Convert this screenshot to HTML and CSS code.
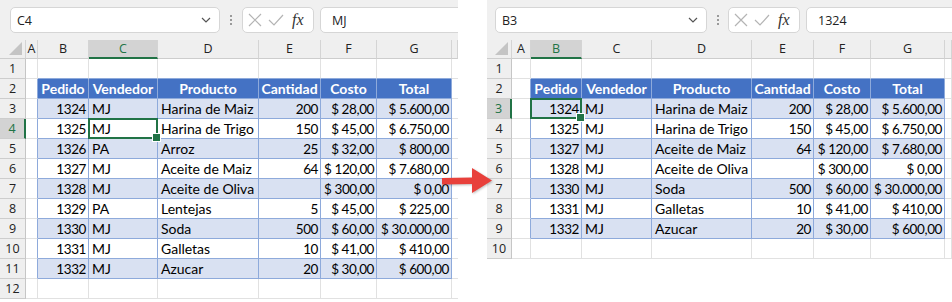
FILE: index.html
```html
<!DOCTYPE html>
<html lang="es">

<head>
  <meta charset="UTF-8">
  <title>Filtrar filas</title>
  <link rel="stylesheet" href="styles.css">
</head>

<body>
  <div class="page">
    <!-- hoja original -->
    <div class="sheet sheet-left">
      <div class="fbar">
        <div class="namebox">
          <span>C4</span>
          <svg class="chev" width="10" height="6" viewBox="0 0 10 6"><polyline points="1,1 5,5 9,1" fill="none" stroke="#555" stroke-width="1.2"/></svg>
        </div>
        <div class="grip"><i></i><i></i><i></i></div>
        <div class="fxbox">
          <svg width="14" height="14" viewBox="0 0 14 14"><path d="M1 1 L13 13 M13 1 L1 13" stroke="#b4b4b4" stroke-width="1.2"/></svg>
          <svg width="16" height="14" viewBox="0 0 16 14"><polyline points="1,7 6,12 15,2" fill="none" stroke="#b4b4b4" stroke-width="1.2"/></svg>
          <span class="fx">fx</span>
        </div>
        <div class="finput">MJ</div>
      </div>
      <div class="grid grid-left">
        <div class="h corner"></div><div class="h">A</div><div class="h">B</div><div class="h hsel">C</div><div class="h">D</div><div class="h">E</div><div class="h">F</div><div class="h">G</div><div class="h"></div>

        <div class="r">1</div><div class="c"></div><div class="c top"></div><div class="c top"></div><div class="c top"></div><div class="c top"></div><div class="c top"></div><div class="c top"></div><div class="c"></div>

        <div class="r">2</div><div class="c tl"></div><div class="c th">Pedido</div><div class="c th">Vendedor</div><div class="c th">Producto</div><div class="c th">Cantidad</div><div class="c th">Costo</div><div class="c th">Total</div><div class="c"></div>

        <div class="r">3</div><div class="c tl"></div><div class="c t b n">1324</div><div class="c t b">MJ</div><div class="c t b">Harina de Maiz</div><div class="c t b n">200</div><div class="c t b n">$ 28,00</div><div class="c t b n">$ 5.600,00</div><div class="c"></div>

        <div class="r rsel">4</div><div class="c tl"></div><div class="c t n">1325</div><div class="c t sel">MJ</div><div class="c t">Harina de Trigo</div><div class="c t n">150</div><div class="c t n">$ 45,00</div><div class="c t n">$ 6.750,00</div><div class="c"></div>

        <div class="r">5</div><div class="c tl"></div><div class="c t b n">1326</div><div class="c t b">PA</div><div class="c t b">Arroz</div><div class="c t b n">25</div><div class="c t b n">$ 32,00</div><div class="c t b n">$ 800,00</div><div class="c"></div>

        <div class="r">6</div><div class="c tl"></div><div class="c t n">1327</div><div class="c t">MJ</div><div class="c t">Aceite de Maiz</div><div class="c t n">64</div><div class="c t n">$ 120,00</div><div class="c t n">$ 7.680,00</div><div class="c"></div>

        <div class="r">7</div><div class="c tl"></div><div class="c t b n">1328</div><div class="c t b">MJ</div><div class="c t b">Aceite de Oliva</div><div class="c t b n"></div><div class="c t b n">$ 300,00</div><div class="c t b n">$ 0,00</div><div class="c"></div>

        <div class="r">8</div><div class="c tl"></div><div class="c t n">1329</div><div class="c t">PA</div><div class="c t">Lentejas</div><div class="c t n">5</div><div class="c t n">$ 45,00</div><div class="c t n">$ 225,00</div><div class="c"></div>

        <div class="r">9</div><div class="c tl"></div><div class="c t b n">1330</div><div class="c t b">MJ</div><div class="c t b">Soda</div><div class="c t b n">500</div><div class="c t b n">$ 60,00</div><div class="c t b n">$ 30.000,00</div><div class="c"></div>

        <div class="r">10</div><div class="c tl"></div><div class="c t n">1331</div><div class="c t">MJ</div><div class="c t">Galletas</div><div class="c t n">10</div><div class="c t n">$ 41,00</div><div class="c t n">$ 410,00</div><div class="c"></div>

        <div class="r">11</div><div class="c tl"></div><div class="c t b n">1332</div><div class="c t b">MJ</div><div class="c t b">Azucar</div><div class="c t b n">20</div><div class="c t b n">$ 30,00</div><div class="c t b n">$ 600,00</div><div class="c"></div>

        <div class="r">12</div><div class="c"></div><div class="c"></div><div class="c"></div><div class="c"></div><div class="c"></div><div class="c"></div><div class="c"></div><div class="c"></div>
      </div>
    </div>

    <!-- hoja filtrada -->
    <div class="sheet sheet-right">
      <div class="fbar">
        <div class="namebox">
          <span>B3</span>
          <svg class="chev" width="10" height="6" viewBox="0 0 10 6"><polyline points="1,1 5,5 9,1" fill="none" stroke="#555" stroke-width="1.2"/></svg>
        </div>
        <div class="grip"><i></i><i></i><i></i></div>
        <div class="fxbox">
          <svg width="14" height="14" viewBox="0 0 14 14"><path d="M1 1 L13 13 M13 1 L1 13" stroke="#b4b4b4" stroke-width="1.2"/></svg>
          <svg width="16" height="14" viewBox="0 0 16 14"><polyline points="1,7 6,12 15,2" fill="none" stroke="#b4b4b4" stroke-width="1.2"/></svg>
          <span class="fx">fx</span>
        </div>
        <div class="finput">1324</div>
      </div>
      <div class="grid grid-right">
        <div class="h corner"></div><div class="h">A</div><div class="h hsel">B</div><div class="h">C</div><div class="h">D</div><div class="h">E</div><div class="h">F</div><div class="h">G</div><div class="h"></div>

        <div class="r">1</div><div class="c"></div><div class="c top"></div><div class="c top"></div><div class="c top"></div><div class="c top"></div><div class="c top"></div><div class="c top"></div><div class="c"></div>

        <div class="r">2</div><div class="c tl"></div><div class="c th">Pedido</div><div class="c th">Vendedor</div><div class="c th">Producto</div><div class="c th">Cantidad</div><div class="c th">Costo</div><div class="c th">Total</div><div class="c"></div>

        <div class="r rsel">3</div><div class="c tl"></div><div class="c t b n sel">1324</div><div class="c t b">MJ</div><div class="c t b">Harina de Maiz</div><div class="c t b n">200</div><div class="c t b n">$ 28,00</div><div class="c t b n">$ 5.600,00</div><div class="c"></div>

        <div class="r">4</div><div class="c tl"></div><div class="c t n">1325</div><div class="c t">MJ</div><div class="c t">Harina de Trigo</div><div class="c t n">150</div><div class="c t n">$ 45,00</div><div class="c t n">$ 6.750,00</div><div class="c"></div>

        <div class="r">5</div><div class="c tl"></div><div class="c t b n">1327</div><div class="c t b">MJ</div><div class="c t b">Aceite de Maiz</div><div class="c t b n">64</div><div class="c t b n">$ 120,00</div><div class="c t b n">$ 7.680,00</div><div class="c"></div>

        <div class="r">6</div><div class="c tl"></div><div class="c t n">1328</div><div class="c t">MJ</div><div class="c t">Aceite de Oliva</div><div class="c t n"></div><div class="c t n">$ 300,00</div><div class="c t n">$ 0,00</div><div class="c"></div>

        <div class="r">7</div><div class="c tl"></div><div class="c t b n">1330</div><div class="c t b">MJ</div><div class="c t b">Soda</div><div class="c t b n">500</div><div class="c t b n">$ 60,00</div><div class="c t b n">$ 30.000,00</div><div class="c"></div>

        <div class="r">8</div><div class="c tl"></div><div class="c t n">1331</div><div class="c t">MJ</div><div class="c t">Galletas</div><div class="c t n">10</div><div class="c t n">$ 41,00</div><div class="c t n">$ 410,00</div><div class="c"></div>

        <div class="r">9</div><div class="c tl"></div><div class="c t b n">1332</div><div class="c t b">MJ</div><div class="c t b">Azucar</div><div class="c t b n">20</div><div class="c t b n">$ 30,00</div><div class="c t b n">$ 600,00</div><div class="c"></div>

        <div class="r">10</div><div class="c"></div><div class="c"></div><div class="c"></div><div class="c"></div><div class="c"></div><div class="c"></div><div class="c"></div><div class="c"></div>
      </div>
    </div>

    <svg class="arrow" width="56" height="30" viewBox="0 0 56 30">
      <path d="M2 12 L32 11.5 L32 2 L52 14.5 L32 27 L32 18 L2 18.5 Z" fill="#e8403b"/>
    </svg>
  </div>
</body>

</html>
```

FILE: styles.css
```css
* {
  padding: 0;
  margin: 0;
  box-sizing: border-box;
}

body {
  background-color: #fff;
  font-family: "Lato", "Liberation Sans", sans-serif;
  color: #000;
}

.page {
  position: relative;
  display: flex;
  gap: 29px;
  width: 952px;
  height: 302px;
  overflow: hidden;
}

.sheet {
  overflow: hidden;
}

.sheet-left {
  width: 458px;
}

.sheet-right {
  width: 465px;
}

/* barra de fórmulas */
.fbar {
  display: flex;
  align-items: center;
  height: 40px;
  padding-left: 10px;
  background-color: #f0f0f0;
  font-family: "Open Sans", "Noto Sans", sans-serif;
  font-size: 12.5px;
  color: #222;
}

.sheet-right .fbar {
  padding-left: 8px;
}

.namebox {
  display: flex;
  align-items: center;
  justify-content: space-between;
  width: 210px;
  height: 26px;
  padding: 0 8px 0 6px;
  background-color: #fff;
  border: 1px solid #d6d6d6;
  border-radius: 5px;
}

.sheet-right .namebox {
  width: 212px;
}

.grip {
  display: flex;
  flex-direction: column;
  align-items: center;
  justify-content: center;
  gap: 2px;
  width: 22px;
}

.sheet-right .grip {
  width: 21px;
}

.grip i {
  display: block;
  width: 2px;
  height: 2px;
  background-color: #9a9a9a;
}

.fxbox {
  display: flex;
  align-items: center;
  gap: 6px;
  width: 72px;
  height: 26px;
  padding-left: 5px;
  background-color: #fff;
  border: 1px solid #d6d6d6;
  border-radius: 5px;
}

.fx {
  font-family: "Liberation Serif", serif;
  font-style: italic;
  font-size: 16px;
  color: #333;
  margin-left: 2px;
}

.finput {
  flex: 1;
  height: 26px;
  margin-left: 6px;
  margin-right: -6px;
  padding: 4px 11px;
  background-color: #fff;
  border: 1px solid #d6d6d6;
  border-radius: 5px;
}

/* cuadrícula */
.grid {
  display: grid;
  grid-template-rows: 19px;
  grid-auto-rows: 20px;
}

.grid-left {
  grid-template-columns: 26px 12px 51px 69px 101px 62px 56px 75px 6px;
}

.grid-right {
  grid-template-columns: 25px 19px 51px 70px 100px 62px 57px 74px 7px;
}

.h,
.r {
  background-color: #efefef;
  border-right: 1px solid #d4d4d4;
  border-bottom: 1px solid #cdcdcd;
  font-family: "Open Sans", "Noto Sans", sans-serif;
  font-size: 12.5px;
  line-height: 18px;
  text-align: center;
  color: #222;
}

.r {
  border-right-color: #c6c6c6;
  line-height: 19px;
}

.corner {
  position: relative;
}

.corner::after {
  content: "";
  position: absolute;
  right: 3px;
  bottom: 3px;
  border-left: 13px solid transparent;
  border-bottom: 13px solid #c4c4c4;
}

.hsel {
  background-color: #d3d3d3;
  border-bottom: 2px solid #217346;
  color: #217346;
}

.rsel {
  background-color: #d3d3d3;
  border-right: 2px solid #217346;
  color: #217346;
}

.c {
  padding: 1px 3px 0;
  border-right: 1px solid #e1e1e1;
  border-bottom: 1px solid #e1e1e1;
  font-size: 14px;
  line-height: 18px;
  white-space: nowrap;
  overflow: hidden;
}

.top {
  border-bottom-color: #8eaadb;
}

.tl {
  border-right-color: #8eaadb;
}

.t {
  border-color: #8eaadb;
}

.b {
  background-color: #d9e1f2;
}

.th {
  background-color: #4472c4;
  border-color: #8eaadb;
  color: #fff;
  font-weight: bold;
  text-align: center;
  padding: 1px 1px 0;
}

.n {
  padding-right: 2px;
  font-size: 13.5px;
  letter-spacing: -0.4px;
  text-align: right;
}

/* celda activa */
.sel {
  position: relative;
  overflow: visible;
  z-index: 2;
}

.sel::after {
  content: "";
  position: absolute;
  left: -1px;
  top: -1px;
  right: -1px;
  bottom: -1px;
  border: 2px solid #217346;
}

.sel::before {
  content: "";
  position: absolute;
  right: -4px;
  bottom: -4px;
  width: 7px;
  height: 7px;
  background-color: #217346;
  border: 1px solid #fff;
  z-index: 1;
}

.arrow {
  position: absolute;
  left: 440px;
  top: 166px;
  filter: drop-shadow(1px 1px 1px rgba(0, 0, 0, 0.25));
}
```
